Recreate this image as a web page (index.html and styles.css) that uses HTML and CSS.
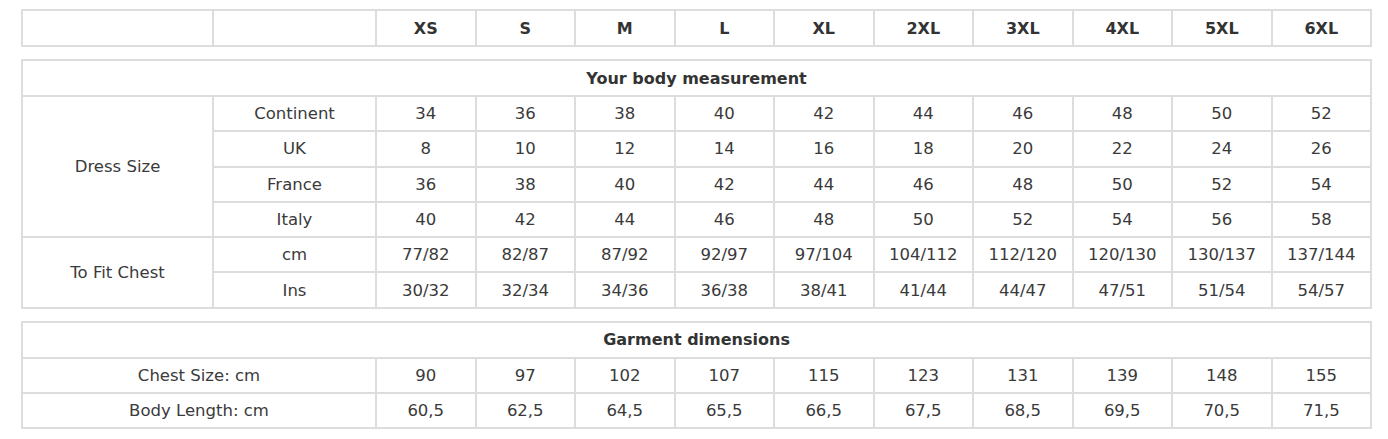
FILE: index.html
```html
<!DOCTYPE html>
<html>
<head>
<meta charset="utf-8">
<link rel="stylesheet" href="styles.css">
</head>
<body>
<div class="wrap">
  <table class="chart">
    <colgroup><col class="c1"><col class="c2"><col span="10" class="cs"></colgroup>
    <tr class="head">
      <td></td><td></td><td>XS</td><td>S</td><td>M</td><td>L</td><td>XL</td><td>2XL</td><td>3XL</td><td>4XL</td><td>5XL</td><td>6XL</td>
    </tr>
  </table>

  <table class="chart">
    <colgroup><col class="c1"><col class="c2"><col span="10" class="cs"></colgroup>
    <tr class="title"><td colspan="12">Your body measurement</td></tr>
    <tr><td rowspan="4">Dress Size</td><td>Continent</td><td>34</td><td>36</td><td>38</td><td>40</td><td>42</td><td>44</td><td>46</td><td>48</td><td>50</td><td>52</td></tr>
    <tr><td>UK</td><td>8</td><td>10</td><td>12</td><td>14</td><td>16</td><td>18</td><td>20</td><td>22</td><td>24</td><td>26</td></tr>
    <tr><td>France</td><td>36</td><td>38</td><td>40</td><td>42</td><td>44</td><td>46</td><td>48</td><td>50</td><td>52</td><td>54</td></tr>
    <tr><td>Italy</td><td>40</td><td>42</td><td>44</td><td>46</td><td>48</td><td>50</td><td>52</td><td>54</td><td>56</td><td>58</td></tr>
    <tr><td rowspan="2">To Fit Chest</td><td>cm</td><td>77/82</td><td>82/87</td><td>87/92</td><td>92/97</td><td>97/104</td><td>104/112</td><td>112/120</td><td>120/130</td><td>130/137</td><td>137/144</td></tr>
    <tr><td>Ins</td><td>30/32</td><td>32/34</td><td>34/36</td><td>36/38</td><td>38/41</td><td>41/44</td><td>44/47</td><td>47/51</td><td>51/54</td><td>54/57</td></tr>
  </table>

  <table class="chart">
    <colgroup><col class="c1"><col class="c2"><col span="10" class="cs"></colgroup>
    <tr class="title"><td colspan="12">Garment dimensions</td></tr>
    <tr><td colspan="2">Chest Size: cm</td><td>90</td><td>97</td><td>102</td><td>107</td><td>115</td><td>123</td><td>131</td><td>139</td><td>148</td><td>155</td></tr>
    <tr><td colspan="2">Body Length: cm</td><td>60,5</td><td>62,5</td><td>64,5</td><td>65,5</td><td>66,5</td><td>67,5</td><td>68,5</td><td>69,5</td><td>70,5</td><td>71,5</td></tr>
  </table>
</div>
</body>
</html>
```

FILE: styles.css
```css
html, body {
  margin: 0;
  padding: 0;
  background: #ffffff;
}

body {
  font-family: "DejaVu Sans", sans-serif;
  color: #333333;
}

.wrap {
  display: flex;
  flex-direction: column;
  gap: 12px;
  padding: 9px 0 0 21px;
  width: 1349px;
}

.chart {
  width: 1349px;
  table-layout: fixed;
  border-collapse: collapse;
  border: 2px solid #dddddd;
}

.c1 { width: 191px; }
.c2 { width: 163px; }
.cs { width: 99.5px; }

.chart td {
  border: 2px solid #dddddd;
  height: 33.3px;
  padding: 0;
  text-align: center;
  vertical-align: middle;
  font-size: 16.5px;
  white-space: nowrap;
  color: #3a3a3a;
}

.head td,
.title td {
  font-weight: bold;
  font-size: 16px;
  height: 34px;
  color: #333333;
}
```
